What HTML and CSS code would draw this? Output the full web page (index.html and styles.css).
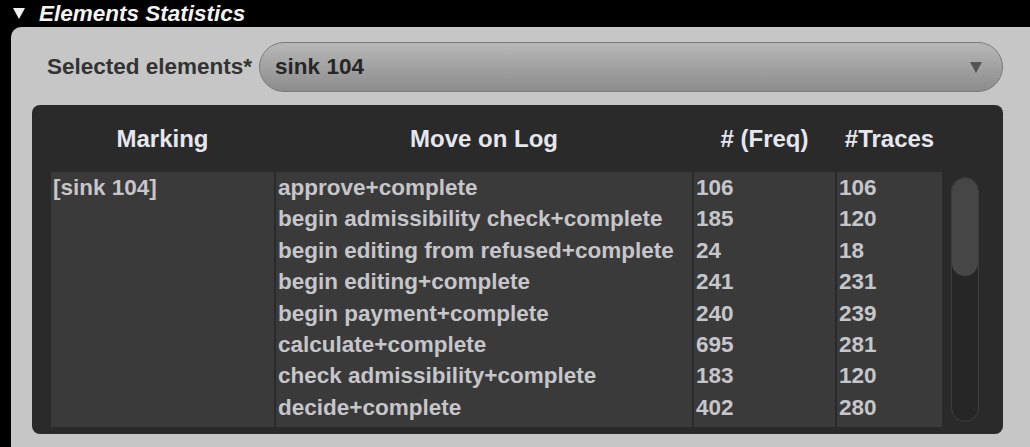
FILE: index.html
```html
<!DOCTYPE html>
<html>
  <head>
    <title>Elements Statistics</title>
    <link rel="stylesheet" href="styles.css">
  </head>
  <body>
    <div class="section-title">
      <span class="caret"></span>
      <span>Elements Statistics</span>
    </div>

    <div class="panel">
      <div class="selector">
        <label class="selector-label">Selected elements*</label>
        <div class="combo">
          <span>sink 104</span>
          <span class="combo-arrow"></span>
        </div>
      </div>

      <div class="stats">
        <div class="stats-head">
          <div>Marking</div>
          <div>Move on Log</div>
          <div># (Freq)</div>
          <div>#Traces</div>
        </div>
        <div class="stats-body">
          <div class="col">
            <div>[sink 104]</div>
          </div>
          <div class="col">
            <div>approve+complete</div>
            <div>begin admissibility check+complete</div>
            <div>begin editing from refused+complete</div>
            <div>begin editing+complete</div>
            <div>begin payment+complete</div>
            <div>calculate+complete</div>
            <div>check admissibility+complete</div>
            <div>decide+complete</div>
          </div>
          <div class="col">
            <div>106</div>
            <div>185</div>
            <div>24</div>
            <div>241</div>
            <div>240</div>
            <div>695</div>
            <div>183</div>
            <div>402</div>
          </div>
          <div class="col">
            <div>106</div>
            <div>120</div>
            <div>18</div>
            <div>231</div>
            <div>239</div>
            <div>281</div>
            <div>120</div>
            <div>280</div>
          </div>
          <div class="scrollbar">
            <div class="scroll-thumb"></div>
          </div>
        </div>
      </div>
    </div>
  </body>
</html>
```

FILE: styles.css
```css
body {
  background-color: #000000;
  margin: 0;
  font-family: 'Liberation Sans', Arial, sans-serif;
  font-weight: bold;
  font-size: 22.5px;
  overflow: hidden;
}

.section-title {
  height: 27px;
  display: flex;
  align-items: center;
  gap: 14px;
  padding-left: 13px;
  color: #f4f4f4;
  font-style: italic;
  font-size: 22.5px;
}

.caret {
  width: 0;
  height: 0;
  border-left: 6px solid transparent;
  border-right: 6px solid transparent;
  border-top: 11px solid #f0f0f0;
}

.panel {
  margin-left: 11px;
  height: 420px;
  background-color: #c6c6c6;
  border-top-left-radius: 10px;
  padding: 15px 27px 0 21px;
  box-sizing: border-box;
}

.selector {
  display: flex;
  align-items: center;
  gap: 7px;
  padding-left: 15px;
}

.selector-label {
  color: #333333;
}

.combo {
  flex: 1;
  height: 50px;
  box-sizing: border-box;
  border: 1px solid #7a7a7a;
  border-radius: 25px;
  background: linear-gradient(#b8b8b8, #8c8c8c);
  display: flex;
  align-items: center;
  justify-content: space-between;
  padding: 0 20px 0 15px;
  color: #262626;
}

.combo-arrow {
  width: 0;
  height: 0;
  border-left: 6px solid transparent;
  border-right: 6px solid transparent;
  border-top: 11px solid #555555;
}

.stats {
  margin-top: 13px;
  height: 329px;
  background-color: #2a2a2a;
  border-radius: 8px;
  padding: 0 0 7px 19px;
  box-sizing: border-box;
}

.stats-head,
.stats-body {
  display: grid;
  grid-template-columns: 223px 416px 141px 105px 35px;
  column-gap: 2px;
}

.stats-head {
  height: 67px;
  align-items: center;
  color: #e6e6ee;
  font-size: 24px;
  text-align: center;
}

.stats-body {
  height: 255px;
  color: #c6c6ca;
}

.col {
  background-color: #3a3a3a;
  padding-left: 2px;
  line-height: 31.4px;
  overflow: hidden;
  white-space: nowrap;
}

.scrollbar {
  margin: 5px 0 5px 7px;
  border: 1px solid #3e3e3e;
  border-radius: 14px;
  background-color: #262626;
  overflow: hidden;
}

.scroll-thumb {
  height: 98px;
  background-color: #464646;
  border-radius: 14px;
}
```
